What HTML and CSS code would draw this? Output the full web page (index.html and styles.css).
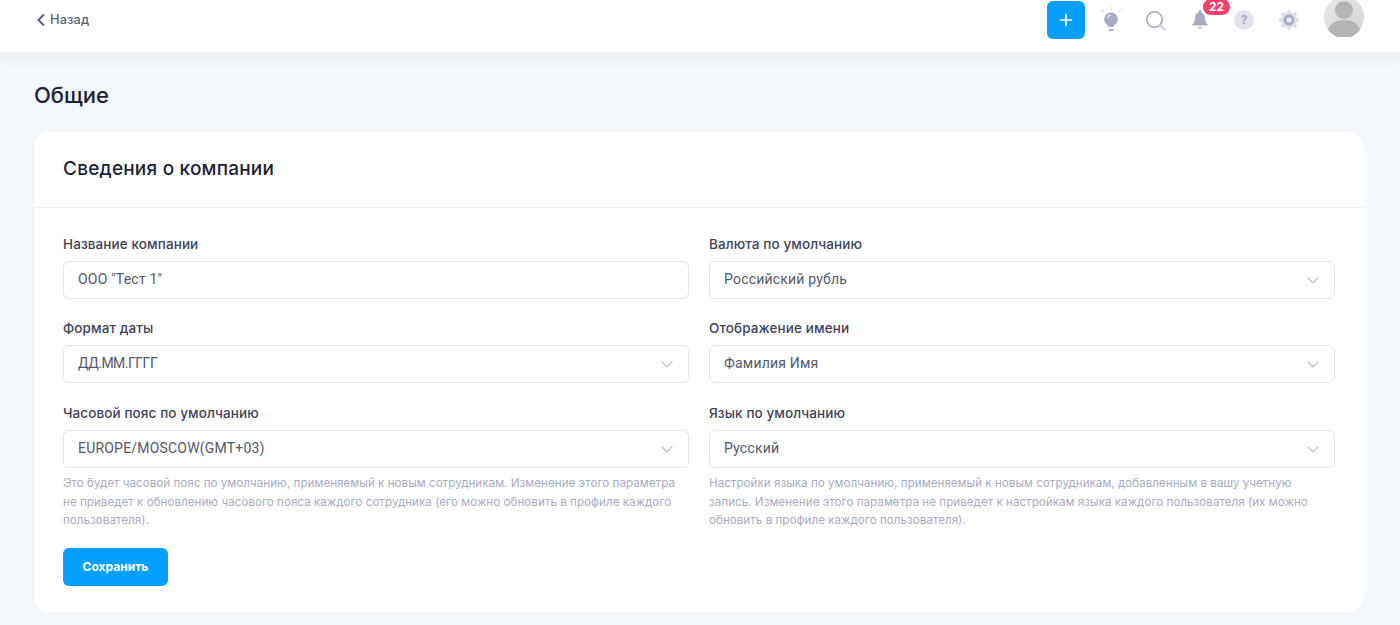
FILE: index.html
```html
<!DOCTYPE html>
<html lang="ru">
<head>
<meta charset="utf-8">
<title>Общие</title>
<link rel="stylesheet" href="styles.css">
</head>
<body>
<header class="topbar">
  <a class="back" href="#">
    <svg class="back-icon" width="10" height="14" viewBox="0 0 10 14"><path d="M8 1.500 2.500 7 8 12.500" fill="none" stroke="#5b6078" stroke-width="2"/></svg>
    <span>Назад</span>
  </a>
  <div class="tools">
    <button class="add" type="button"><svg width="14" height="14" viewBox="0 0 14 14"><path d="M7 1v12M1 7h12" stroke="#fff" stroke-width="1.700"/></svg></button>
    <svg class="tool tool-bulb" width="22" height="26" viewBox="0 0 22 26">
      <path d="M1 2.500l3 2.500M21 2.500l-3 2.500M11 .5v3" stroke="#dfe0e8" stroke-width="1.500" fill="none"/>
      <path d="M11 5.500a6.800 6.800 0 0 0-4.200 12.100c1 .8 1.700 1.600 1.700 2.400h5c0-.8.700-1.600 1.700-2.400A6.800 6.800 0 0 0 11 5.500z" fill="#a9acc0"/>
      <path d="M8.500 22h5v1.800h-5z" fill="#a9acc0"/>
      <path d="M7.500 11a3.800 3.800 0 0 1 3.500-3" stroke="#dfe0e8" stroke-width="1.200" fill="none"/>
    </svg>
    <svg class="tool tool-search" width="22" height="22" viewBox="0 0 22 22">
      <circle cx="9.500" cy="9.500" r="7.800" fill="none" stroke="#a9acc0" stroke-width="1.700"/>
      <path d="M15.500 15.500 20.500 20.500" stroke="#cfd1dc" stroke-width="1.800"/>
    </svg>
    <div class="bell">
      <svg width="18" height="20" viewBox="0 0 18 20">
        <path d="M9 0a1.400 1.400 0 0 1 1.400 1.400v1.200C13 3.400 13.800 5.600 14 8c.2 2.500.7 4.300 2.800 6.500v1H1.200v-1C3.300 12.300 3.800 10.500 4 8c.2-2.400 1-4.600 3.600-5.400V1.400A1.400 1.400 0 0 1 9 0z" fill="#a9acc0"/>
        <path d="M6.500 16.500h5c0 1.500-1.100 2.500-2.500 2.500s-2.500-1-2.500-2.500z" fill="#cfd1dc"/>
      </svg>
      <span class="badge">22</span>
    </div>
    <span class="help">?</span>
    <svg class="tool tool-gear" width="20" height="20" viewBox="0 0 20 20">
      <path d="M8.300 0h3.400l.5 2.600 1.600.7 2.200-1.500 2.300 2.300-1.500 2.200.7 1.600 2.500.4v3.400l-2.500.5-.7 1.600 1.500 2.200-2.300 2.300-2.200-1.500-1.600.7-.5 2.500H8.300l-.5-2.500-1.600-.7L4 18l-2.300-2.300 1.500-2.200-.7-1.600L0 11.400V8.300l2.500-.4.700-1.600-1.500-2.200L4 1.800l2.200 1.500 1.600-.7z" fill="#dfe0e8"/>
      <circle cx="10" cy="10" r="5.500" fill="#a9acc0"/>
      <circle cx="10" cy="10" r="2.500" fill="#eceef3"/>
    </svg>
    <svg class="avatar" width="40" height="40" viewBox="0 0 40 40">
      <defs><linearGradient id="avatar-bg" x1="0" y1="0" x2="1" y2="1"><stop offset="0" stop-color="#e6e6e6"/><stop offset="1" stop-color="#d4d4d4"/></linearGradient></defs>
      <circle cx="20" cy="20" r="20" fill="url(#avatar-bg)"/>
      <circle cx="20" cy="13" r="9" fill="#b4b4b6"/>
      <path d="M4 33c2-7 9-10 16-10s14 3 16 10a20 20 0 0 1-32 0z" fill="#b4b4b6"/>
    </svg>
  </div>
</header>
<main class="page">
  <h1 class="page-title">Общие</h1>
  <section class="card">
    <h2 class="card-title">Сведения о компании</h2>
    <form class="card-body">
      <div class="grid">
        <div class="field">
          <label class="label">Название компании</label>
          <div class="control">ООО "Тест 1"</div>
        </div>
        <div class="field">
          <label class="label">Валюта по умолчанию</label>
          <div class="control select">Российский рубль<svg class="chev" width="12" height="7" viewBox="0 0 12 7"><path d="M.7.7 6 6 11.300.7" fill="none" stroke="#b3b5c2" stroke-width="1.100"/></svg></div>
        </div>
        <div class="field">
          <label class="label">Формат даты</label>
          <div class="control select compact">ДД.ММ.ГГГГ<svg class="chev" width="12" height="7" viewBox="0 0 12 7"><path d="M.7.7 6 6 11.300.7" fill="none" stroke="#b3b5c2" stroke-width="1.100"/></svg></div>
        </div>
        <div class="field">
          <label class="label">Отображение имени</label>
          <div class="control select">Фамилия Имя<svg class="chev" width="12" height="7" viewBox="0 0 12 7"><path d="M.7.7 6 6 11.300.7" fill="none" stroke="#b3b5c2" stroke-width="1.100"/></svg></div>
        </div>
        <div class="field">
          <label class="label">Часовой пояс по умолчанию</label>
          <div class="control select">EUROPE/MOSCOW(GMT+03)<svg class="chev" width="12" height="7" viewBox="0 0 12 7"><path d="M.7.7 6 6 11.300.7" fill="none" stroke="#b3b5c2" stroke-width="1.100"/></svg></div>
          <p class="hint">Это будет часовой пояс по умолчанию, применяемый к новым сотрудникам. Изменение этого параметра не приведет к обновлению часового пояса каждого сотрудника (его можно обновить в профиле каждого пользователя).</p>
        </div>
        <div class="field">
          <label class="label">Язык по умолчанию</label>
          <div class="control select">Русский<svg class="chev" width="12" height="7" viewBox="0 0 12 7"><path d="M.7.7 6 6 11.300.7" fill="none" stroke="#b3b5c2" stroke-width="1.100"/></svg></div>
          <p class="hint">Настройки языка по умолчанию, применяемый к новым сотрудникам, добавленным в вашу учетную запись. Изменение этого параметра не приведет к настройкам языка каждого пользователя (их можно обновить в профиле каждого пользователя).</p>
        </div>
      </div>
      <button class="save" type="button">Сохранить</button>
    </form>
  </section>
</main>
</body>
</html>
```
FILE: styles.css
```css
* { box-sizing: border-box; }
html, body { margin: 0; height: 100%; }
body {
  height: 625px;
  overflow: hidden;
  background: #f3f7fb;
  font-family: Inter, "Noto Sans", "Liberation Sans", sans-serif;
  color: #1c1f37;
}
.topbar {
  height: 52px;
  background: #fff;
  display: flex;
  align-items: flex-start;
  justify-content: space-between;
  padding: 0 36px;
  box-shadow: 0 4px 14px rgba(40, 50, 80, .06);
  position: relative;
}
.back {
  display: flex;
  align-items: center;
  gap: 4px;
  height: 39px;
  font-size: 12.8px;
  font-weight: 500;
  letter-spacing: .1px;
  color: #5b6078;
  text-decoration: none;
}
.tools { display: flex; align-items: center; height: 38px; margin-top: 1px; }
.add {
  width: 38px;
  height: 38px;
  border: 0;
  padding: 0;
  border-radius: 6px;
  background: #049fff;
  display: flex;
  align-items: center;
  justify-content: center;
  margin-right: 15px;
}
.tool { display: block; flex: none; }
.tool-bulb { margin-right: 23px; }
.tool-search { margin-right: 24px; margin-top: 2px; }
.bell { position: relative; width: 18px; height: 20px; margin-right: 25px; }
.bell svg { display: block; }
.badge {
  position: absolute;
  left: 12px;
  top: -11px;
  width: 27px;
  height: 16px;
  border-radius: 8px;
  background: #f4406a;
  color: #fff;
  font-size: 12px;
  font-weight: 700;
  line-height: 16px;
  text-align: center;
}
.help {
  width: 20px;
  height: 20px;
  border-radius: 50%;
  background: #e2e3eb;
  color: #a9acc0;
  font-size: 12px;
  font-weight: 700;
  line-height: 20px;
  text-align: center;
  margin-right: 25px;
}
.tool-gear { margin-right: 25px; }
.avatar { display: block; flex: none; margin-top: -6px; margin-right: 0; }
.page { padding: 30px 36px 0 34px; }
.page-title {
  margin: 0 0 24px;
  font-size: 22px;
  line-height: 26px;
  font-weight: 500;
  color: #1c1f37;
}
.card {
  background: #fff;
  border-radius: 16px;
  height: 480px;
}
.card-title {
  margin: 0;
  height: 76px;
  padding: 0 29px;
  font-size: 19px;
  letter-spacing: .2px;
  line-height: 73px;
  font-weight: 500;
  border-bottom: 1px solid #eceef3;
}
.card-body { padding: 26px 29px 0; }
.grid {
  display: grid;
  grid-template-columns: 626px 626px;
  column-gap: 20px;
  row-gap: 19.4px;
}
.label {
  display: block;
  font-size: 13.5px;
  letter-spacing: .1px;
  line-height: 20px;
  font-weight: 500;
  color: #3f4258;
  margin-bottom: 7px;
}
.control {
  position: relative;
  height: 38px;
  border: 1px solid #e3e4ef;
  border-radius: 6px;
  padding: 0 14px;
  font-family: Roboto, Inter, sans-serif;
  font-size: 14px;
  letter-spacing: .2px;
  line-height: 35px;
  color: #55586a;
}
.compact { letter-spacing: -.5px; }
.chev { position: absolute; right: 15px; top: 15px; }
.hint {
  margin: 6.5px 0 0;
  font-size: 11.67px;
  line-height: 18.400px;
  color: #a9acc0;
}
.save {
  display: block;
  margin-top: 18px;
  width: 105px;
  height: 38px;
  border: 0;
  border-radius: 6px;
  background: #049fff;
  color: #fff;
  font: 700 12px Inter, "Noto Sans", sans-serif;
}
```
